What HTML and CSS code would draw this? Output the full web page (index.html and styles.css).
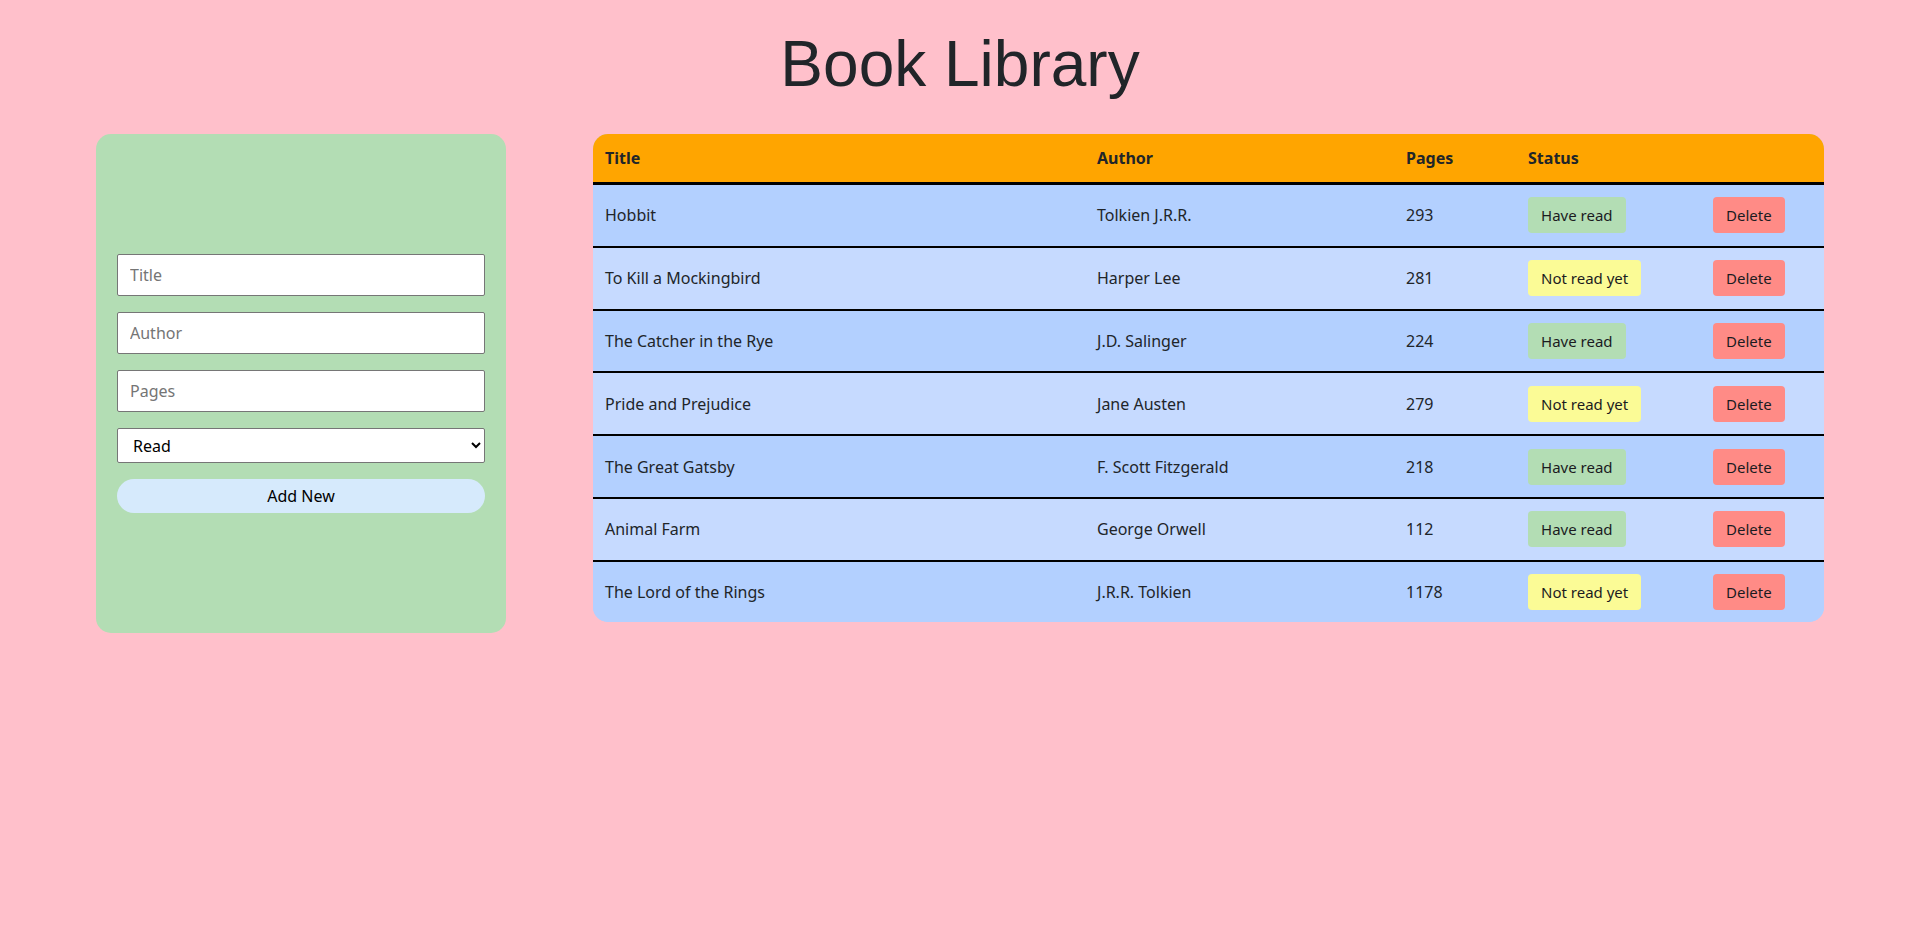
FILE: index.html
```html
<!DOCTYPE html>
<html lang="en">
<head>
<meta charset="utf-8">
<title>Book Library</title>
<link rel="stylesheet" href="styles.css">
</head>
<body>
<h1 class="page-title">Book Library</h1>
<main class="layout">
  <section class="form-card">
    <form class="book-form">
      <input class="field" type="text" placeholder="Title">
      <input class="field" type="text" placeholder="Author">
      <input class="field" type="number" placeholder="Pages">
      <select class="field select">
        <option>Read</option>
        <option>Not read yet</option>
      </select>
      <button class="add-btn" type="button">Add New</button>
    </form>
  </section>
  <section class="table-wrap">
    <table class="books">
      <colgroup>
        <col class="c-title"><col class="c-author"><col class="c-pages"><col class="c-status"><col class="c-action">
      </colgroup>
      <thead>
        <tr><th>Title</th><th>Author</th><th>Pages</th><th>Status</th><th></th></tr>
      </thead>
      <tbody>
        <tr><td>Hobbit</td><td>Tolkien J.R.R.</td><td>293</td><td><button class="badge read">Have read</button></td><td><button class="badge del">Delete</button></td></tr>
        <tr><td>To Kill a Mockingbird</td><td>Harper Lee</td><td>281</td><td><button class="badge unread">Not read yet</button></td><td><button class="badge del">Delete</button></td></tr>
        <tr><td>The Catcher in the Rye</td><td>J.D. Salinger</td><td>224</td><td><button class="badge read">Have read</button></td><td><button class="badge del">Delete</button></td></tr>
        <tr><td>Pride and Prejudice</td><td>Jane Austen</td><td>279</td><td><button class="badge unread">Not read yet</button></td><td><button class="badge del">Delete</button></td></tr>
        <tr><td>The Great Gatsby</td><td>F. Scott Fitzgerald</td><td>218</td><td><button class="badge read">Have read</button></td><td><button class="badge del">Delete</button></td></tr>
        <tr><td>Animal Farm</td><td>George Orwell</td><td>112</td><td><button class="badge read">Have read</button></td><td><button class="badge del">Delete</button></td></tr>
        <tr><td>The Lord of the Rings</td><td>J.R.R. Tolkien</td><td>1178</td><td><button class="badge unread">Not read yet</button></td><td><button class="badge del">Delete</button></td></tr>
      </tbody>
    </table>
  </section>
</main>
</body>
</html>
```

FILE: styles.css
```css
* { box-sizing: border-box; }

html, body {
  margin: 0;
  padding: 0;
}

body {
  background: #ffc0cb;
  font-family: "Noto Sans", "Open Sans", sans-serif;
  font-size: 16px;
  color: #212529;
  min-height: 947px;
}

.page-title {
  margin: 0;
  padding-top: 27px;
  font-family: "Liberation Sans", Arial, sans-serif;
  font-weight: 400;
  font-size: 64px;
  line-height: 74px;
  text-align: center;
  color: #212529;
}

.layout {
  display: flex;
  align-items: flex-start;
  gap: 87px;
  padding: 33px 96px 0;
}

.form-card {
  flex: 0 0 410px;
  height: 499px;
  background: #b3ddb4;
  border-radius: 15px;
  padding: 0 21px;
  display: flex;
  flex-direction: column;
  justify-content: center;
}

.book-form {
  display: flex;
  flex-direction: column;
  gap: 16px;
}

.field {
  width: 100%;
  height: 42px;
  padding: 8px 12px;
  font-family: "Noto Sans", sans-serif;
  font-size: 16px;
  line-height: 24px;
  color: #000;
  background: #fff;
  border: 1px solid #767676;
  border-radius: 2px;
  outline: none;
}

.field::placeholder { color: #757575; }

.field[type=number] { -moz-appearance: textfield; }
.field::-webkit-inner-spin-button,
.field::-webkit-outer-spin-button { -webkit-appearance: none; margin: 0; }

.select {
  height: 35px;
  padding: 0 8px 0 11px;
}

.add-btn {
  width: 100%;
  height: 34px;
  border: none;
  border-radius: 17px;
  background: #d6eafc;
  font-family: "Noto Sans", sans-serif;
  font-size: 16px;
  color: #000;
  cursor: pointer;
}

.table-wrap {
  flex: 1 1 auto;
  border-radius: 15px;
  overflow: hidden;
  background: #b3d0ff;
}

.books {
  width: 100%;
  border-collapse: separate;
  border-spacing: 0;
  table-layout: fixed;
}

.c-title { width: 492px; }
.c-author { width: 309px; }
.c-pages { width: 122px; }
.c-status { width: 185px; }
.c-action { width: 123px; }

.books th {
  background: #ffa500;
  text-align: left;
  font-weight: 700;
  padding: 12px 12px;
  line-height: 24px;
  border-bottom: 3px solid #000;
}

.books td {
  padding: 12.4px 12px;
  line-height: 24px;
  vertical-align: middle;
}

.books tbody tr:nth-child(odd) td { background: #b3d0ff; }
.books tbody tr:nth-child(even) td { background: #c6daff; }
.books tbody tr + tr td { border-top: 2px solid #000; }

.badge {
  display: inline-block;
  height: 36px;
  padding: 0 13px;
  border: none;
  border-radius: 4px;
  font-family: "Noto Sans", sans-serif;
  font-size: 15px;
  line-height: 36px;
  color: #1b1b1f;
  vertical-align: middle;
}

.read { background: #b3ddb4; }
.unread { background: #fbfb96; }
.del { background: #ff8b86; }
```
